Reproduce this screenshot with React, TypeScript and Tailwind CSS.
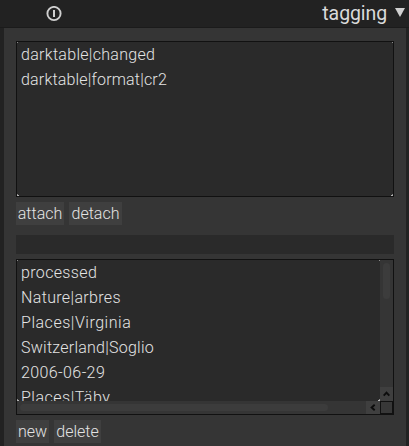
import type { ReactNode } from 'react';

type Item = { text: string; tracking: string };

const attached: Item[] = [
  { text: 'darktable|changed', tracking: 'tracking-[0.3px]' },
  { text: 'darktable|format|cr2', tracking: 'tracking-[0.18px]' },
];

const known: Item[] = [
  { text: 'processed', tracking: 'tracking-[0.35px]' },
  { text: 'Nature|arbres', tracking: 'tracking-[0.35px]' },
  { text: 'Places|Virginia', tracking: 'tracking-[0.53px]' },
  { text: 'Switzerland|Soglio', tracking: 'tracking-[0.25px]' },
  { text: '2006-06-29', tracking: 'tracking-[0.4px]' },
  { text: 'Places|Täby', tracking: 'tracking-[0.5px]' },
];

function Rows({ items }: { items: Item[] }) {
  return (
    <ul className="pl-1">
      {items.map((item) => (
        <li key={item.text} className="h-[25px] leading-[25px] whitespace-nowrap">
          <span className={item.tracking}>{item.text}</span>
        </li>
      ))}
    </ul>
  );
}

function Button({ className, children }: { className: string; children: ReactNode }) {
  return (
    <button className={`flex h-[23px] items-center justify-center bg-[#3f3f3f] whitespace-nowrap ${className}`}>
      {children}
    </button>
  );
}

function Corners() {
  return (
    <>
      <i className="absolute top-0 left-0 size-px bg-[#8c8c8c]" />
      <i className="absolute top-0 right-0 size-px bg-[#8c8c8c]" />
      <i className="absolute bottom-0 left-0 h-px w-[2px] bg-[#b4b4b4]" />
      <i className="absolute bottom-px left-0 size-px bg-[#8c8c8c]" />
      <i className="absolute right-0 bottom-0 h-px w-[2px] bg-[#b4b4b4]" />
      <i className="absolute right-0 bottom-px size-px bg-[#8c8c8c]" />
    </>
  );
}

export default function App() {
  return (
    <div className="flex h-[446px] w-[409px] flex-col overflow-hidden bg-[#222222] font-['Roboto','Liberation_Sans',sans-serif] text-[16px] font-light text-[#e4e4e4]">
      <header className="flex h-[28px] shrink-0 items-center justify-between border-b border-[#1b1b1b] pr-1 pl-[46px]">
        <svg className="size-4" viewBox="0 0 16 16" fill="none" stroke="#d0d0d0">
          <circle cx="8" cy="7.5" r="6.6" strokeWidth="1.9" />
          <path d="M8 4v7" strokeWidth="2" />
        </svg>
        <div className="flex items-center gap-[8px]">
          <h1 className="text-[19.5px] leading-[27px] font-normal tracking-[-0.1px] text-[#dadada]">tagging</h1>
          <svg className="mt-[-3px] h-[9px] w-[10px]" viewBox="0 0 10 9" fill="#d0d0d0">
            <path d="M0 0h10L5 9z" />
          </svg>
        </div>
      </header>
      <main className="mr-[3px] ml-1 flex grow flex-col bg-[#353535] pt-[13px] pr-3 pl-3">
        <section className="relative h-[156px] w-[378px] shrink-0 border border-[#111111] bg-[#2a2a2a]">
          <Rows items={attached} />
          <Corners />
        </section>
        <div className="mt-[5px] flex gap-[5px]">
          <Button className="w-12">attach</Button>
          <Button className="w-[53px]">detach</Button>
        </div>
        <div className="mt-[10px] h-[19px] w-[378px] shrink-0 bg-[#2a2a2a]" />
        <section className="mt-[5px] grid h-[156px] w-[378px] shrink-0 grid-cols-[363px_13px] grid-rows-[141px_13px] border border-[#111111] bg-[#353535]">
          <div className="relative overflow-hidden bg-[#2a2a2a]">
            <Rows items={known} />
            <Corners />
          </div>
          <div className="flex flex-col items-center justify-between pt-[3px]">
            <div className="h-9 w-[7px] rounded-full bg-[#3c3c3c]" />
            <div className="flex h-[14px] w-full items-center justify-center bg-[#3f3f3f]">
              <svg className="h-[6px] w-[7px]" viewBox="0 0 7 6" fill="none" stroke="#0c0c0c" strokeWidth="1.9">
                <path d="M.7 4.7 3.5 1.6l2.8 3.1" />
              </svg>
            </div>
          </div>
          <div className="flex items-center justify-between pl-[3px]">
            <div className="h-[7px] w-[308px] rounded-full bg-[#3c3c3c]" />
            <div className="flex h-full w-[14px] items-center justify-center bg-[#3f3f3f]">
              <svg className="h-[7px] w-[6px]" viewBox="0 0 6 7" fill="none" stroke="#0c0c0c" strokeWidth="1.9">
                <path d="M4.7.7 1.6 3.5l3.1 2.8" />
              </svg>
            </div>
          </div>
          <div className="border border-[#111111] bg-[#383838]" />
        </section>
        <div className="mt-[5px] flex gap-[5px]">
          <Button className="w-[33px]">new</Button>
          <Button className="w-[47px]">delete</Button>
        </div>
      </main>
    </div>
  );
}
